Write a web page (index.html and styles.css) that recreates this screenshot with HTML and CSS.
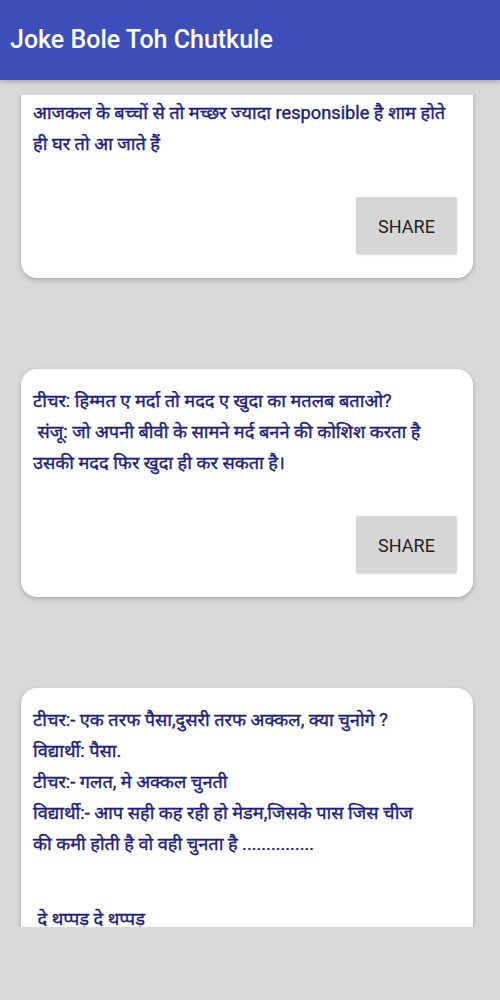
FILE: index.html
```html
<!DOCTYPE html>
<html lang="hi">
<head>
<meta charset="utf-8">
<title>Joke Bole Toh Chutkule</title>
<link rel="stylesheet" href="styles.css">
</head>
<body>
<header class="appbar">
  <h1 class="title">Joke Bole Toh Chutkule</h1>
</header>
<main class="viewport">
  <div class="list">
    <article class="card card-first">
      <p class="joke">आजकल के बच्चों से तो मच्छर ज्यादा responsible है शाम होते ही घर तो आ जाते हैं</p>
      <div class="actions"><button class="share">SHARE</button></div>
    </article>
    <article class="card">
      <p class="joke">टीचर: हिम्मत ए मर्दा तो मदद ए खुदा का मतलब बताओ?<br>&nbsp;संजू: जो अपनी बीवी के सामने मर्द बनने की कोशिश करता है उसकी मदद फिर खुदा ही कर सकता है।</p>
      <div class="actions"><button class="share">SHARE</button></div>
    </article>
    <article class="card">
      <p class="joke">टीचर:- एक तरफ पैसा,दुसरी तरफ अक्कल, क्या चुनोगे ?<br>विद्यार्थी: पैसा.<br>टीचर:- गलत, मे अक्कल चुनती<br>विद्यार्थी:- आप सही कह रही हो मेडम,जिसके पास जिस चीज<br>की कमी होती है वो वही चुनता है ...............</p>
      <p class="joke joke-tail">&nbsp;दे थप्पड़ दे थप्पड़</p>
      <div class="actions"><button class="share">SHARE</button></div>
    </article>
  </div>
</main>
</body>
</html>
```

FILE: styles.css
```css
* { box-sizing: border-box; }
html, body {
  margin: 0;
  padding: 0;
  background: #d9d9d9;
}
body {
  width: 500px;
  height: 1000px;
  overflow: hidden;
  font-family: Roboto, "Noto Sans", "Noto Sans Devanagari", sans-serif;
}
.appbar {
  height: 80px;
  background: #3e4eb8;
  display: flex;
  align-items: center;
  padding-left: 10px;
  box-shadow: 0 2px 4px rgba(0,0,0,0.2);
  position: relative;
  z-index: 1;
}
.title {
  margin: 0 0 2px 0;
  color: #ffffff;
  font-family: Roboto, sans-serif;
  font-weight: 500;
  font-size: 25px;
  letter-spacing: 0;
}
.viewport {
  padding-top: 15px;
}
.list {
  height: 832px;
  overflow: hidden;
  padding-left: 21px;
}
.card {
  width: 452px;
  background: #ffffff;
  border-radius: 16px;
  box-shadow: 0 2px 5px rgba(0,0,0,0.22);
  padding: 16px 14px 24px 12px;
  margin-bottom: 91px;
}
.card-first {
  margin-top: -14px;
}
.joke {
  margin: 0;
  color: #1f1f7a;
  font-size: 18.2px;
  line-height: 31px;
  font-weight: 400;
  -webkit-text-stroke: 0.4px #1f1f7a;
}
.joke-tail {
  margin-top: 44px;
}
.actions {
  display: flex;
  justify-content: flex-end;
  margin-top: 38px;
  padding-right: 2px;
}
.share {
  width: 101px;
  height: 57px;
  border: none;
  border-radius: 2px;
  background: #d6d6d6;
  color: #222222;
  font-family: Roboto, sans-serif;
  font-size: 18px;
  font-weight: 400;
  padding-top: 3px;
  box-shadow: 0 1px 2px rgba(0,0,0,0.15);
}
```
